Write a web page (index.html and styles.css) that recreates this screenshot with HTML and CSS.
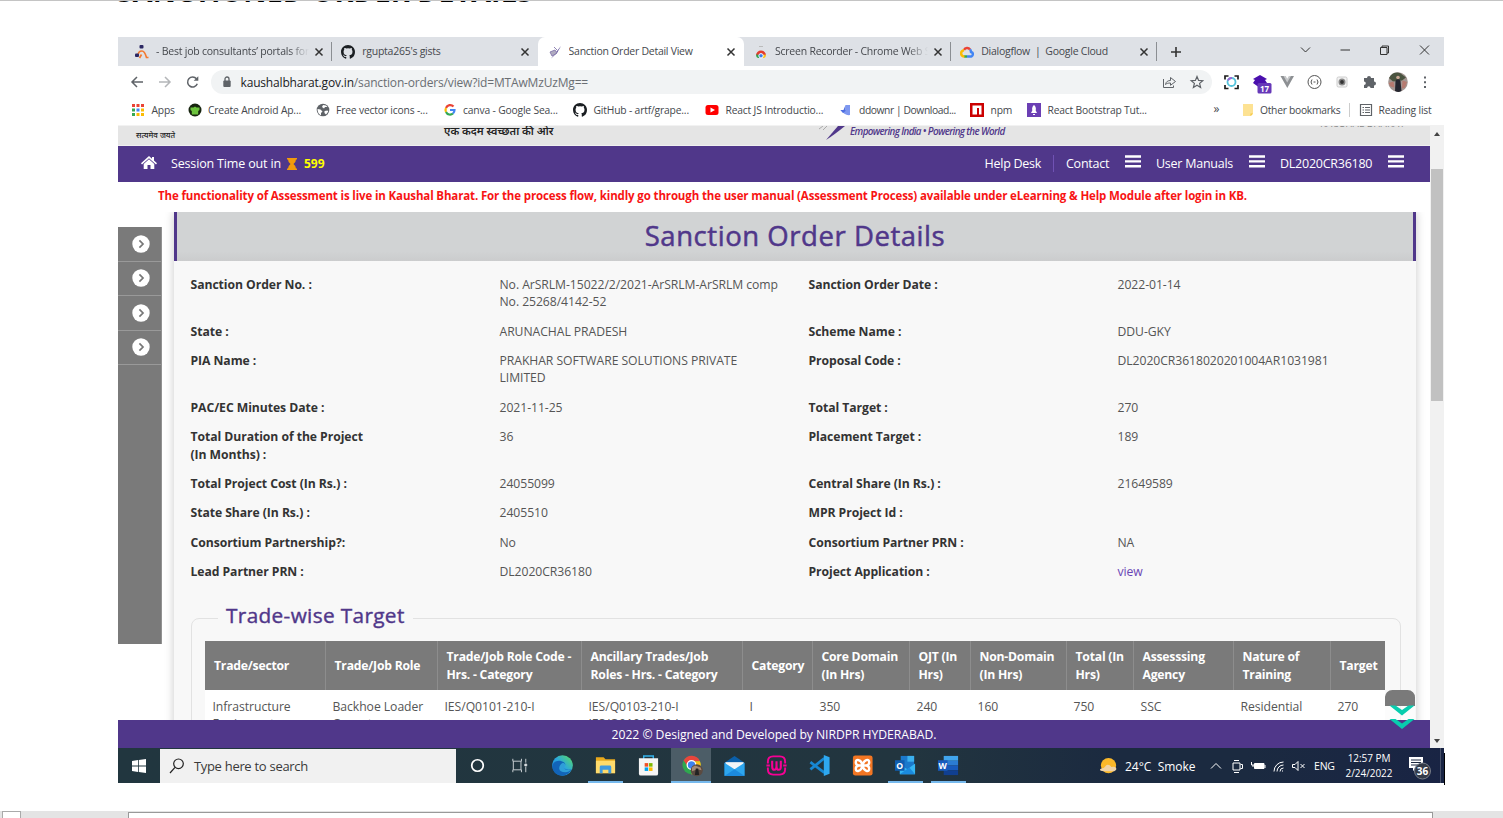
FILE: index.html
```html
<!DOCTYPE html>
<html lang="en">
<head>
<meta charset="utf-8">
<title>Sanction Order Detail View</title>
<link rel="stylesheet" href="styles.css">
</head>
<body>
<svg width="0" height="0" class="defs">
  <defs>
    <symbol id="x" viewBox="0 0 10 10"><path d="M1.500 1.500l7 7M8.500 1.500l-7 7" stroke="#333" stroke-width="1.500"/></symbol>
    <symbol id="github" viewBox="0 0 16 16"><path fill="#1b1f23" d="M8 0C3.58 0 0 3.58 0 8c0 3.54 2.29 6.53 5.47 7.59.4.07.55-.17.55-.38v-1.49c-2.01.37-2.53-.49-2.69-.94-.09-.23-.48-.94-.82-1.13-.28-.15-.68-.52-.01-.53.63-.01 1.08.58 1.23.82.72 1.21 1.87.87 2.33.66.07-.52.28-.87.51-1.07-1.78-.2-3.64-.89-3.64-3.95 0-.87.31-1.59.82-2.15-.08-.2-.36-1.02.08-2.12 0 0 .67-.21 2.2.82a7.400 7.400 0 014 0c1.530-1.040 2.200-.82 2.200-.82.44 1.100.16 1.920.08 2.120.51.56.82 1.270.82 2.150 0 3.070-1.870 3.750-3.650 3.950.29.25.54.73.54 1.480v2.200c0 .21.15.46.55.38A8 8 0 0016 8c0-4.420-3.580-8-8-8z"/></symbol>
    <symbol id="bars" viewBox="0 0 16 13"><path d="M0 1.500h16M0 6.400h16M0 11.300h16" stroke="#fff" stroke-width="2.400"/></symbol>
    <symbol id="arrow" viewBox="0 0 18 18"><circle cx="9" cy="9" r="8.700" fill="#fff"/><path d="M7.400 5.400L11 9l-3.600 3.600" fill="none" stroke="#777" stroke-width="1.700"/></symbol>
    <linearGradient id="edge" x1="0" y1="1" x2="1" y2="0"><stop offset="0" stop-color="#1476d2"/><stop offset=".5" stop-color="#2aa5e0"/><stop offset="1" stop-color="#5be05a"/></linearGradient>
  </defs>
</svg>

<div class="doc-top"><h1>SANCTIONED ORDER DETAILS</h1></div>

<div class="window">
  <div class="tabs">
    <div class="tab sep">
      <svg class="fav" viewBox="0 0 14 14"><path d="M3 11c0-4 1.500-5 4-5s3.500 3 4.500 6.500h2M6.500 9.500L4.500 13" fill="none" stroke="#f47a30" stroke-width="1.700"/><rect x="4.500" y="0" width="4" height="3.600" rx="1" fill="#2b2763"/><rect x="0" y="8.500" width="4" height="3.600" rx="1" fill="#2b2763"/></svg>
      <span class="fade">- Best job consultants’ portals for</span><svg class="close"><use href="#x"/></svg>
    </div>
    <div class="tab">
      <svg class="fav"><use href="#github"/></svg><span>rgupta265's gists</span><svg class="close"><use href="#x"/></svg>
    </div>
    <div class="tab active">
      <svg class="fav" viewBox="0 0 14 14"><path d="M3 13.500L13 1 9 8z" fill="#5d4c96"/><path d="M2 7l5-2 2 3-5 3zM6 2l3 3" fill="#b0abc0" stroke="#8478ad" stroke-width=".9"/></svg>
      <span>Sanction Order Detail View</span><svg class="close"><use href="#x"/></svg>
    </div>
    <div class="tab sep">
      <svg class="fav" viewBox="0 0 14 14"><path d="M5 1.500h4" stroke="#bbb"/><path d="M2 10.500a5 5 0 0110 0z" fill="#e33b2e"/><path d="M12 9.500q0 3-2 3.500H7.500V10z" fill="#fbc116"/><path d="M2 9.500q0 3 2 3.500h3V10z" fill="#2aa24c"/><circle cx="7" cy="10.800" r="2.200" fill="#3b7ded" stroke="#fff"/></svg>
      <span class="fade">Screen Recorder - Chrome Web S</span><svg class="close"><use href="#x"/></svg>
    </div>
    <div class="tab sep">
      <svg class="fav" viewBox="0 0 14 14" fill="none" stroke-width="2.500"><path d="M4 5a3.500 3.500 0 016-.5" stroke="#ea4335"/><path d="M10 4.500c1 1 .8 1.500 1 2.500a2.300 2.300 0 01-1 4.500H7" stroke="#4285f4"/><path d="M7 11.500H4" stroke="#34a853"/><path d="M4.500 11.500A3 3 0 014 5.300" stroke="#fbbc05"/></svg>
      <span>Dialogflow&nbsp; |&nbsp; Google Cloud</span><svg class="close"><use href="#x"/></svg>
    </div>
    <svg class="plus" viewBox="0 0 12 12"><path d="M6 1v10M1 6h10" stroke="#333" stroke-width="1.600"/></svg>
    <svg class="controls" viewBox="0 0 132 12" fill="none" stroke="#333"><path d="M1 3.500l4.500 4.500L10 3.500M40.500 6H50M80.500 3.500h6.500v7h-6.500zM82 3.500V2h6.500v7H87M120 1.500l9 9M129 1.500l-9 9"/></svg>
  </div>

  <div class="toolbar">
    <svg class="navbtns" viewBox="0 0 70 16" fill="none" stroke="#5f6368" stroke-width="1.500"><path d="M13 8H2M7 3L2 8l5 5"/><path d="M29 8h11M35 3l5 5-5 5" stroke="#b4b6b9"/><path d="M66.500 4.800a5 5 0 10.800 5"/><path d="M68.300 2.200v4.600h-4.600z" fill="#5f6368" stroke="none"/></svg>
    <div class="omnibox">
      <svg class="lock" viewBox="0 0 10 12"><rect x="1.300" y="4.500" width="7.400" height="6.500" rx="1" fill="#5f6368"/><path d="M3 5V3a2 2 0 014 0v2" fill="none" stroke="#5f6368" stroke-width="1.300"/></svg>
      <span class="url">kaushalbharat.gov.in<i>/sanction-orders/view?id=MTAwMzUzMg==</i></span>
      <svg class="omni-icons" viewBox="0 0 42 14" fill="none" stroke="#5f6368"><path d="M1.500 4v8.500h10v-2M3.500 9.500c.5-3 2.500-4 5-4V2.500L13.500 6.500 8.500 10.300V8c-2.500 0-4 .5-5 1.500z"/><path stroke-width="1.200" d="M35 1.500l1.600 3.900 4.200.3-3.200 2.700 1 4.100L35 10.300l-3.600 2.200 1-4.100-3.200-2.700 4.200-.3z"/></svg>
    </div>
    <svg class="exts" viewBox="0 0 210 24">
      <g fill="none" stroke="#1c1c1c" stroke-width="1.700"><path d="M5 9.500V6h3.500M14.500 6H18v3.500M18 15v3.500h-3.500M8.500 18.500H5V15"/></g><circle cx="11.500" cy="12" r="4" fill="none" stroke="#55c4dc" stroke-width="1.800"/><path d="M8 10.500a4 4 0 014-2.500" stroke="#9d68d8" stroke-width="1.800" fill="none"/>
      <path d="M40 5l7 4-2 1 2 3-7 5-7-5 2-3-2-1z" fill="#4a0fad"/><rect x="37.500" y="13" width="14" height="10.500" rx="1.500" fill="#6638b8"/><text x="44.500" y="21.500" class="badge17">17</text>
      <path d="M60.500 6h4.500l2.200 4L69.500 6H74l-6.700 12z" fill="#8d9093"/><path d="M63.500 6h2.300l1.400 2.800L68.800 6H71l-3.800 6.500z" fill="#c7c9cb"/>
      <circle cx="94.500" cy="12" r="6.500" fill="none" stroke="#555"/><path d="M92 9.500q-2 2.500 0 5M97 9.500q2 2.500 0 5M93.500 12h2" fill="none" stroke="#555"/>
      <rect x="117" y="7" width="10" height="10" rx="1.500" fill="#f2f2f2" stroke="#ccc"/><circle cx="122" cy="12" r="3.500" fill="#888"/><circle cx="122" cy="12" r="1.900" fill="#333"/>
      <path d="M144 8h3a2 2 0 114 0h3v3.500a2 2 0 110 4V18h-3.500a1.700 1.700 0 00-3.400 0H144v-3a1.800 1.800 0 000-3.600z" fill="#5f6368"/>
      <circle cx="178" cy="12" r="9.800" fill="#a39692"/><path d="M169 8q4-7 11-5l6 4.500-4 3-9 1z" fill="#4a5440"/><path d="M168.500 13l5-1.500 1 6-4-1zM182.500 10.500l4.500 1.500-2 5.500-3 1z" fill="#b77a70"/><path d="M175 21l.5-10q2.500-4 5 0l1 10q-3 2-6.500 0z" fill="#25262f"/><circle cx="178" cy="7.500" r="1.800" fill="#c8a794"/>
      <path d="M205 6.500v2M205 11.200v2M205 15.900v2" stroke="#5f6368" stroke-width="2"/>
    </svg>
  </div>

  <div class="bookmarks">
    <div><svg viewBox="0 0 14 14"><g fill="#ea4335"><path d="M1 1h3v3H1zM5.500 1h3v3h-3zM10 1h3v3h-3z"/></g><path d="M1 5.500h3v3H1z" fill="#34a853"/><path d="M5.500 5.500h3v3h-3z" fill="#4285f4"/><path d="M10 5.500h3v3h-3zM5.500 10h3v3h-3zM10 10h3v3h-3z" fill="#fbbc05"/><path d="M1 10h3v3H1z" fill="#34a853"/></svg><span>Apps</span></div>
    <div><svg viewBox="0 0 14 14"><circle cx="7" cy="7" r="6.500" fill="#17240f"/><path d="M2.500 4.500h3L7 3.500l1.500 1h3V7l-1.300 1v3.500H3.800V8L2.500 7z" fill="#6cc33d"/></svg><span>Create Android Ap...</span></div>
    <div><svg viewBox="0 0 14 14"><circle cx="7" cy="7" r="6.300" fill="#5f6368"/><path d="M1.500 6l3 .5 2 2L5 10v2.500Q1.500 10.500 1.500 6zM7 2l-1 2 2 1.500 1-1.500h2.500L10 2.500zM8.500 8l3-.5.800 1L10 11.500 8.500 10z" fill="#fff"/></svg><span>Free vector icons -...</span></div>
    <div><svg viewBox="0 0 14 14" fill="none" stroke-width="2.200"><path d="M3 5a4.500 4.500 0 017.500-1.500" stroke="#ea4335"/><path d="M3 5a4.500 4.500 0 000 4" stroke="#fbbc05"/><path d="M3 9a4.500 4.500 0 007 1.500" stroke="#34a853"/><path d="M10 10.500q1.500-1.500 1.500-3.500H7" stroke="#4285f4"/></svg><span>canva - Google Sea...</span></div>
    <div><svg><use href="#github"/></svg><span>GitHub - artf/grape...</span></div>
    <div><svg viewBox="0 0 14 14"><rect x=".5" y="2" width="13" height="10" rx="2.500" fill="#f00"/><path d="M5.500 4.500v5L10 7z" fill="#fff"/></svg><span>React JS Introductio...</span></div>
    <div class="ddownr"><svg viewBox="0 0 14 14"><path d="M6.500 2H11v10q-5 1-9.500-5h5z" fill="#7d97f0"/><path d="M6.500 2v6L4 10 1.500 7h3z" fill="#4e6ee0"/></svg><span>ddownr | Download...</span></div>
    <div><svg viewBox="0 0 14 14"><path d="M0 0h14v14H0z" fill="#cb0000"/><path d="M2.500 2.500h9v9H9V5H7v6.500H2.500z" fill="#fff"/></svg><span>npm</span></div>
    <div><svg viewBox="0 0 14 14"><path d="M0 0h14v14H0z" fill="#6b3fb4"/><path d="M7 2q2.500 2 1.700 5.500L10 10H4l1.300-2.500Q4.500 4 7 2zM6 11h2v1H6z" fill="#fff"/></svg><span>React Bootstrap Tut...</span></div>
    <div class="more">»</div>
    <div class="folder"><svg viewBox="0 0 14 14"><path d="M2 1h10v10l-2 2H2z" fill="#fde293"/><path d="M9.500 13v-2.500H12z" fill="#f3c63f"/></svg><span>Other bookmarks</span></div>
    <div class="reading"><svg viewBox="0 0 14 14" fill="none" stroke="#5f6368" stroke-width="1.200"><path d="M1.500 1.500h11v11h-11zM3.500 4.500H5M3.500 7H5M3.500 9.500H5M6 4.500h5M6 7h5M6 9.500h5"/></svg><span>Reading list</span></div>
  </div>

  <div class="viewport">
    <div class="site">
      <header class="banner">
        <span class="hi motto">सत्यमेव जयते</span>
        <span class="hi swachh">एक कदम स्वच्छता की ओर</span>
        <svg class="swoosh" viewBox="0 0 26 14"><path d="M26 0h-7L7 14q8-5 19-14z" fill="#50378a"/><path d="M4 0L0 3M8 0L4 4" stroke="#aaa"/></svg>
        <span class="tagline">Empowering India • Powering the World</span>
        <span class="cropped">KAUSHAL BHARAT</span>
      </header>
      <nav class="nav">
        <svg class="home" viewBox="0 0 16 13"><path d="M8 0l3 2.700V1h2v3.500l3 2.800-1 1.100-7-6.200-7 6.200-1-1.100z" fill="#fff"/><path d="M8 3.200l5.300 4.700V13H9.500V9h-3v4H2.700V7.900z" fill="#fff"/></svg>
        <span class="session">Session Time out in</span>
        <svg class="glass" viewBox="0 0 10 12"><path d="M0 0h10v1.500H9Q9 4 6.500 6 9 8 9 10.500h1V12H0v-1.500h1Q1 8 3.500 6 1 4 1 1.500H0z" fill="#f29b0c"/></svg>
        <b class="timer">599</b>
        <div class="menu">
          <span class="help">Help Desk</span><span class="contact">Contact</span><svg><use href="#bars"/></svg>
          <span class="manuals">User Manuals</span><svg><use href="#bars"/></svg>
          <span class="user">DL2020CR36180</span><svg><use href="#bars"/></svg>
        </div>
      </nav>
      <p class="notice">The functionality of Assessment is live in Kaushal Bharat. For the process flow, kindly go through the user manual (Assessment Process) available under eLearning &amp; Help Module after login in KB.</p>
      <div class="cols">
        <aside class="side">
          <div><svg><use href="#arrow"/></svg></div><div><svg><use href="#arrow"/></svg></div><div><svg><use href="#arrow"/></svg></div><div><svg><use href="#arrow"/></svg></div>
        </aside>
        <main class="panel">
          <h2>Sanction Order Details</h2>
          <div class="panel-body">
            <dl class="details">
              <dt>Sanction Order No. :</dt><dd>No. ArSRLM-15022/2/2021-ArSRLM-ArSRLM comp<br>No. 25268/4142-52</dd><dt>Sanction Order Date :</dt><dd>2022-01-14</dd>
              <dt>State :</dt><dd>ARUNACHAL PRADESH</dd><dt>Scheme Name :</dt><dd>DDU-GKY</dd>
              <dt>PIA Name :</dt><dd>PRAKHAR SOFTWARE SOLUTIONS PRIVATE<br>LIMITED</dd><dt>Proposal Code :</dt><dd>DL2020CR3618020201004AR1031981</dd>
              <dt>PAC/EC Minutes Date :</dt><dd>2021-11-25</dd><dt>Total Target :</dt><dd>270</dd>
              <dt>Total Duration of the Project<br>(In Months) :</dt><dd>36</dd><dt>Placement Target :</dt><dd>189</dd>
              <dt>Total Project Cost (In Rs.) :</dt><dd>24055099</dd><dt>Central Share (In Rs.) :</dt><dd>21649589</dd>
              <dt>State Share (In Rs.) :</dt><dd>2405510</dd><dt>MPR Project Id :</dt><dd></dd>
              <dt>Consortium Partnership?:</dt><dd>No</dd><dt>Consortium Partner PRN :</dt><dd>NA</dd>
              <dt>Lead Partner PRN :</dt><dd>DL2020CR36180</dd><dt>Project Application :</dt><dd><a>view</a></dd>
            </dl>
            <fieldset>
              <legend>Trade-wise Target</legend>
              <table>
                <colgroup><col class="c1"><col class="c2"><col class="c3"><col class="c4"><col class="c5"><col class="c6"><col class="c7"><col class="c8"><col class="c9"><col class="c10"><col class="c11"><col class="c12"></colgroup>
                <thead><tr><th>Trade/sector</th><th>Trade/Job Role</th><th>Trade/Job Role Code -<br>Hrs. - Category</th><th>Ancillary Trades/Job<br>Roles - Hrs. - Category</th><th>Category</th><th>Core Domain<br>(In Hrs)</th><th>OJT (In<br>Hrs)</th><th>Non-Domain<br>(In Hrs)</th><th>Total (In<br>Hrs)</th><th>Assesssing<br>Agency</th><th>Nature of<br>Training</th><th>Target</th></tr></thead>
                <tbody><tr><td>Infrastructure<br>Equipment</td><td>Backhoe Loader<br>Operator</td><td>IES/Q0101-210-I</td><td>IES/Q0103-210-I<br>IES/Q0104-170-I</td><td>I</td><td>350</td><td>240</td><td>160</td><td>750</td><td>SSC</td><td>Residential</td><td>270</td></tr></tbody>
              </table>
            </fieldset>
          </div>
        </main>
      </div>
      <footer>2022 © Designed and Developed by NIRDPR HYDERABAD.</footer>
      <svg class="godown" viewBox="0 0 31 40"><path d="M0 16V8a7.500 7.500 0 017.500-8h15A7.500 7.500 0 0130 8v8z" fill="#7a7a7a"/><path d="M0 16h30v14H0z" fill="#fff" opacity=".6"/><path d="M4.500 15.500h6l6.500 4.500 6.500-4.500h6L17 25.500zM4.500 29h6l6.500 4.500 6.500-4.500h6L17 39z" fill="#08cdae"/></svg>
    </div>
    <div class="scroll"><span class="up"></span><span class="thumb"></span><span class="down"></span></div>
  </div>

  <div class="taskbar">
    <div class="start"><svg viewBox="0 0 14 14"><path d="M0 2l6-.9v5.500H0zM6.800 1L14 0v6.600H6.800zM0 7.400h6v5.500L0 12zM6.800 7.400H14V14l-7.200-1z" fill="#fff"/></svg></div>
    <div class="search"><svg viewBox="0 0 16 16" fill="none" stroke="#222" stroke-width="1.200"><circle cx="9.500" cy="5.800" r="4.800"/><path d="M6 9.300L1 15"/></svg>Type here to search</div>
    <div class="apps">
      <div><svg viewBox="0 0 24 24"><circle cx="12" cy="12" r="6" fill="none" stroke="#fff" stroke-width="1.800"/></svg></div>
      <div><svg viewBox="0 0 24 24" fill="none" stroke="#ccd2d5"><path d="M4 5v2.500h9V5M4 19v-2.500h9V19M4.500 7.500v9M12.500 7.500v9M17.500 5v4M17.500 13.500V19"/><path d="M16.500 10.500h2v2h-2z" fill="#fff"/></svg></div>
      <div><svg viewBox="0 0 24 24"><circle cx="12" cy="12" r="10.800" fill="url(#edge)"/><path d="M1.300 13C2 8 7 6 11 7.500q4 1 4 4-1 1-1.500 2 1 4 8 2.500-4 7-10.500 6.800Q2 21.500 1.300 13z" fill="#1264b8"/><path d="M8.500 15q0-4 4-6 3 1 2.500 3-1.500 1-1 2.500 1 3.500 7 1.500-2 3-6 3-6 0-6.500-4z" fill="#3bb7e6" opacity=".7"/></svg></div>
      <div class="open"><svg viewBox="0 0 24 24"><path d="M2 3.500h8l2 2h10V20H2z" fill="#e9a91c"/><path d="M2 7h20v13H2z" fill="#ffdb6b"/><path d="M6 20v-6.500q0-1.500 1.500-1.500h9q1.500 0 1.500 1.500V20h-3v-3.500H9V20z" fill="#3f9ae0"/></svg></div>
      <div><svg viewBox="0 0 24 24"><path d="M7 6V2h10v4" fill="none" stroke="#35b3ec" stroke-width="1.500"/><path d="M2 4.500h20v16q0 2-2 2H4q-2 0-2-2z" fill="#f5f5f5"/><path d="M8 9.500h3.700v3.700H8z" fill="#f25022"/><path d="M12.500 9.500h3.700v3.700h-3.700z" fill="#7fba00"/><path d="M8 14h3.700v3.700H8z" fill="#00a4ef"/><path d="M12.500 14h3.700v3.700h-3.700z" fill="#ffb900"/></svg></div>
      <div class="open current"><svg viewBox="0 0 24 24"><circle cx="12" cy="11.500" r="9.500" fill="#2fa84f"/><path d="M3.800 6.800a9.500 9.500 0 0117 .7H12l-3.500 6z" fill="#e8453c"/><path d="M20.800 7.500a9.500 9.500 0 01-9 13.500l4-8-1-5.500z" fill="#fbc116"/><circle cx="12" cy="11.500" r="4.500" fill="#3e82f1" stroke="#fff" stroke-width="1.300"/><circle cx="17.500" cy="17" r="6.300" fill="#5b4a40"/><path d="M12.500 14l3-2 6 2 1 3-4-1-6 2z" fill="#a58a75"/><path d="M15.500 22l1-7H19l1 7z" fill="#222"/></svg></div>
      <div><svg viewBox="0 0 24 24"><path d="M1.500 9L12 2l10.500 7v13h-21z" fill="#0b5fa9"/><path d="M2.500 8.500h19v9h-19z" fill="#f2f5f7"/><path d="M1.500 9L12 16l10.500-7v14h-21z" fill="#2ea6ee"/><path d="M1.500 23L12 16l10.500 7z" fill="#1c8ade"/></svg></div>
      <div><svg viewBox="0 0 24 24" fill="none" stroke="#f70094"><path d="M3 10V8q0-5.500 5.500-5.500h7Q21 2.500 21 8v2M3 14v2q0 5.500 5.500 5.500h7Q21 21.500 21 16v-2" stroke-width="2"/><path d="M7.500 7v6q0 3.500 2.200 3.500t2.300-3.500V7.500V13q0 3.500 2.300 3.500t2.200-3.500V7M1.500 12H5M19 12h3.500" stroke-width="2.200"/></svg></div>
      <div><svg viewBox="0 0 24 24"><path d="M2.500 8.500L17 19.500M2.500 16L17 4.500" stroke="#1787d2" stroke-width="2.800" fill="none"/><path d="M16.500 1l6 2.500v17l-6 2.500z" fill="#2ea8f0"/></svg></div>
      <div><svg viewBox="0 0 24 24"><rect x="2" y="1.500" width="20.500" height="21" rx="2.500" fill="#f37623"/><path d="M8 6.500q-3-1-3 2t3 3.500h8q3-.5 3-3.500t-3-2-4 5.500q-1-5-4-5.500zM8 17.500q-3 1-3-2T8 12h8q3 .5 3 3.500t-3 2-4-5.500q-1 5-4 5.500z" fill="none" stroke="#fff" stroke-width="2.500"/></svg></div>
      <div class="open"><svg viewBox="0 0 24 24"><path d="M7 2h14v17H7z" fill="#1b79cc"/><path d="M14 2h7v6h-7z" fill="#3bb0ee"/><path d="M6 11l8 5 8-6v11H6z" fill="#35b5f2"/><path d="M6 21l10-7 6 7z" fill="#1a8ade"/><path d="M1 6.500h10v11H1z" fill="#0f5db0"/><text x="6" y="15.500" class="letter">O</text></svg></div>
      <div class="open"><svg viewBox="0 0 24 24"><path d="M7 2h15v5H7z" fill="#41a5ee"/><path d="M7 7h15v5H7z" fill="#2b7cd3"/><path d="M7 12h15v5H7z" fill="#185abd"/><path d="M7 17h15v5H7z" fill="#103f91"/><path d="M1 6.500h10v11H1z" fill="#185abd"/><text x="6" y="15.500" class="letter">W</text></svg></div>
    </div>
    <div class="tray">
      <svg class="weather" viewBox="0 0 20 18"><circle cx="10" cy="8.500" r="8" fill="#fbb829"/><path d="M5 14.500q-4 0-4-1.500t4-2l3-3q3-1 5 2 4-1 5 1t-2 3.500z" fill="#f1d3a5"/></svg>
      <span class="temp">24°C&nbsp; Smoke</span>
      <svg class="status" viewBox="0 0 98 16" fill="none" stroke="#fff"><path d="M1 10.500L6 5.500l5 5"/><path d="M23 5h7v7h-7zM30.500 6.500h2v4h-2M24 2.500h5M24 14.500h5"/><path d="M44.500 5.500h9.500v5h-9.500z" fill="#fff"/><path d="M41.500 4v3h3M55 7v3M43 7v2"/><path d="M64 13.500A9.500 9.500 0 0173.500 4M67 13.500A6.500 6.500 0 0173.500 7M70 13.500a3.500 3.500 0 013.500-3.500M72 13h1"/><path d="M82.500 6.500H85l3-3v9l-3-3h-2.500zM90.500 6l4 4M94.500 6l-4 4"/></svg>
      <span class="eng">ENG</span>
      <div class="clock">12:57 PM<br>2/24/2022</div>
      <svg class="notif" viewBox="0 0 24 24"><path d="M1 1h14v11H8l-3 3v-3H1z" fill="#fff"/><path d="M3 4h10M3 6.500h10M3 9h8" stroke="#1d2940"/><circle cx="14.500" cy="15" r="8" fill="#333a48" stroke="#777d88"/><text x="14.500" y="19" class="count">36</text></svg>
    </div>
  </div>
</div>

<div class="doc-bottom"><span class="cell"></span><span class="box"></span></div>
</body>
</html>
```
FILE: styles.css
```css
* { box-sizing: border-box; }
body { margin: 0; width: 1503px; height: 818px; overflow: hidden; background: #fff; display: flex; flex-direction: column; font-family: "Open Sans", "Noto Sans", sans-serif; }
.defs { position: absolute; }
svg { flex: none; display: block; }

.doc-top { height: 37px; border-top: 1px solid #c4c4c4; overflow: hidden; flex: none; }
.doc-top h1 { margin: -30px 0 0 117px; font-size: 28.500px; line-height: 40px; color: #000; white-space: nowrap; letter-spacing: .15px; }

.window { margin-left: 118px; width: 1327px; height: 746px; flex: none; display: flex; flex-direction: column; }

.tabs { width: 1326px; height: 29px; background: #dee1e6; display: flex; padding-left: 7.500px; align-items: center; flex: none; }
.tab { width: 206.300px; height: 29px; display: flex; align-items: center; padding-left: 9.500px; font-size: 10.500px; letter-spacing: -.26px; color: #45484d; white-space: nowrap; }
.tab span { flex: 1; overflow: hidden; margin-left: 7px; margin-top: -1px; }
.fav { width: 14px; height: 14px; }
.fade { -webkit-mask-image: linear-gradient(90deg, #000 87%, transparent); mask-image: linear-gradient(90deg, #000 87%, transparent); }
.close { width: 10px; height: 10px; margin: 0 8.500px 0 6px; }
.tab.sep .close { margin: 0 7px 0 5px; }
.tab .fade { letter-spacing: -.22px; }
.tab.sep { border-right: 1px solid #8b8e92; border-image: linear-gradient(transparent 20%, #8b8e92 20%, #8b8e92 80%, transparent 80%) 1; }
.tab.active { background: #fff; border-radius: 7px 7px 0 0; }
.plus { width: 12px; height: 12px; margin-left: 13px; }
.controls { width: 132px; height: 12px; margin: -3px 0 0 118px; }

.toolbar { width: 1326px; height: 32px; display: flex; align-items: center; flex: none; }
.navbtns { width: 70px; height: 16px; margin-left: 12px; }
.omnibox { width: 1001px; height: 24px; margin-left: 11px; border-radius: 12px; background: #f1f3f4; display: flex; align-items: center; }
.lock { width: 10px; height: 12px; margin-left: 10.500px; }
.url { flex: 1; margin-left: 9px; font-size: 12px; color: #202124; letter-spacing: -.17px; }
.url i { font-style: normal; color: #6a6e73; }
.omni-icons { width: 42px; height: 14px; margin-right: 8px; }
.exts { width: 210px; height: 24px; margin-left: 8px; }
.badge17 { font: bold 8px "Open Sans", sans-serif; fill: #fff; text-anchor: middle; }

.bookmarks { width: 1326px; height: 27px; flex: none; padding: 0 0 4px 13px; display: grid; grid-template-columns: 56.500px 128px 127px 130.500px 132px 134px 131px 57px 186.500px 27px 108px 90px; align-items: center; font-size: 10.300px; letter-spacing: -.17px; color: #45484d; white-space: nowrap; }
.bookmarks div { display: flex; align-items: center; gap: 6.500px; }
.bookmarks .ddownr { letter-spacing: -.42px; gap: 6px; }
.bookmarks .folder { letter-spacing: -.28px; gap: 5.500px; }
.bookmarks svg { width: 14px; height: 14px; }
.bookmarks .more { font-size: 12px; margin-top: -2px; }
.reading { border-left: 1px solid #ccc; padding-left: 9px; }
.bookmarks .reading { gap: 6px; }

.viewport { width: 1326px; height: 623px; display: flex; flex: none; }
.site { width: 1312px; height: 623px; position: relative; overflow: hidden; display: flex; flex-direction: column; }
.banner { height: 20px; flex: none; background: #e5e5e5; border-top: 1px solid #f2f2f2; display: flex; overflow: hidden; white-space: nowrap; }
.hi { color: #222; line-height: 14px; font-family: "Noto Sans Devanagari", "Noto Sans", sans-serif; font-weight: 600; }
.motto { width: 290px; margin-left: 18px; font-size: 7.900px; margin-top: 3px; font-weight: 500; }
.swachh { width: 375px; margin-left: 18px; font-size: 10.900px; margin-top: -1px; }
.swoosh { width: 26px; height: 14px; }
.tagline { margin: -1px 0 0 5px; width: 470px; font-size: 9.800px; line-height: 14px; font-weight: 600; font-style: italic; color: #50378a; letter-spacing: -.62px; }
.cropped { font-size: 10px; line-height: 10px; margin-top: -8px; color: #888; }

.nav { height: 37px; flex: none; background: #50378a; border-top: 1px solid #f0f0f0; display: flex; align-items: center; padding-bottom: 2px; color: #fff; font-size: 12.500px; white-space: nowrap; }
.home { width: 16px; height: 13px; margin: -2px 0 0 22.500px; }
.session { width: 111px; margin-left: 14.500px; letter-spacing: -.16px; }
.glass { width: 10px; height: 12px; margin: 1px 0 0 5px; }
.timer { color: #ff0; margin-left: 7px; font-size: 12px; }
.menu { margin-left: auto; padding-right: 26px; display: flex; align-items: center; letter-spacing: -.25px; }
.menu svg { width: 16px; height: 13px; margin: -3px 0 0 -1px; }
.help { width: 69.500px; border-right: 1px solid #7052b4; }
.contact { width: 60px; margin-left: 12px; }
.manuals { width: 94px; margin-left: 15px; }
.user { width: 109px; margin-left: 15px; }

.notice { margin: 0; height: 30px; flex: none; padding-left: 40px; line-height: 27px; font-size: 11.500px; font-weight: 700; color: #f81414; white-space: nowrap; letter-spacing: -.138px; }
.cols { display: flex; height: 508px; flex: none; }
.side { width: 44px; height: 417px; margin-top: 15px; background: #7a7a7a; border-right: 1px solid #929292; }
.side div { height: 34.500px; border-bottom: 1px solid #999; display: flex; align-items: center; padding-left: 14px; }
.side svg { width: 18px; height: 18px; }
.panel { width: 1242px; margin-left: 12px; height: 520px; box-shadow: 0 0 9px rgba(0,0,0,.22); clip-path: inset(0 -14px); background: #f8f8f8; }
.panel h2 { margin: 0; height: 49px; line-height: 47px; background: linear-gradient(#d1d3d4 80%, #cbcccd); border: solid #50378a; border-width: 0 3px; text-align: center; font-size: 27.500px; font-weight: 400; -webkit-text-stroke: .5px #50378a; color: #50378a; letter-spacing: .55px; }
.panel-body { padding: 9px 15.500px 0 16.500px; }
.details { margin: 0; padding-top: 5.700px; display: grid; grid-template-columns: 309px 309px 309px 1fr; row-gap: 12px; font-size: 12.200px; line-height: 17.400px; color: #555; white-space: nowrap; letter-spacing: -.06px; }
.details dt { font-weight: 700; color: #333; }
.details dd { margin: 0; }
.details a { color: #6a45b5; }
fieldset { margin: 19.800px 0 0; border: 1px solid #e2e2e2; border-radius: 8px; padding: 5px 13px 10px 13.500px; height: 200px; min-width: 0; }
legend { margin-left: 13px; padding: 0 8px 5px; font-size: 20.800px; line-height: 31px; font-weight: 400; -webkit-text-stroke: .4px #50378a; color: #50378a; letter-spacing: .34px; }
table { width: 1180px; table-layout: fixed; border-collapse: collapse; font-size: 12.200px; line-height: 17.400px; white-space: nowrap; background: #fff; color: #555; letter-spacing: -.05px; }
th { background: #7a7a7a; color: #fff; text-align: left; height: 49px; padding: 0 0 0 9px; border-left: 1px solid #8d8d8d; font-weight: 700; letter-spacing: -.22px; }
th:first-child { border-left: 0; }
td { vertical-align: top; padding: 7.500px 0 0 7.500px; }
.c1 { width: 120px; } .c2 { width: 112px; } .c3 { width: 144px; } .c4 { width: 161px; } .c5 { width: 70px; } .c6 { width: 97px; }
.c7 { width: 61px; } .c8 { width: 96px; } .c9 { width: 67px; } .c10 { width: 100px; } .c11 { width: 97px; } .c12 { width: 55px; }
footer { position: absolute; left: 0; right: 0; bottom: 0; height: 28px; line-height: 29px; text-align: center; background: #50378a; color: #fff; font-size: 12.200px; letter-spacing: -.05px; }
.godown { position: absolute; left: 1267px; top: 565px; width: 31px; height: 40px; }
.scroll { width: 14px; background: #f1f1f1; display: flex; flex-direction: column; align-items: center; }
.up { margin-top: 7px; border: 3.500px solid transparent; border-top: 0; border-bottom: 4px solid #444; }
.thumb { width: 12px; height: 232px; margin-top: 33px; background: #c1c1c1; }
.down { margin-top: auto; margin-bottom: 5px; border: 3.500px solid transparent; border-bottom: 0; border-top: 4px solid #444; }

.taskbar { position: relative; width: 1326px; height: 35px; display: flex; align-items: center; flex: none; background: linear-gradient(90deg, #21363f 0, #22353f 60%, #1b2a40 75%, #1b2a40 85%, #192444); color: #fff; }
.taskbar::after { content: ""; position: absolute; left: 1326px; top: 5px; width: 1px; height: 32px; background: #000; }
.start { width: 42px; display: flex; padding-left: 14px; }
.start svg { width: 14px; height: 14px; }
.search { width: 296px; height: 34px; background: #f1f1f1; display: flex; align-items: center; gap: 9px; padding-left: 9px; font-size: 13px; color: #3a3a3a; letter-spacing: -.34px; word-spacing: .2px; }
.search svg { width: 16px; height: 16px; }
.apps { display: flex; height: 35px; }
.apps div { width: 42.800px; height: 35px; display: flex; align-items: center; justify-content: center; background-repeat: no-repeat; }
.apps svg { width: 23px; height: 23px; }
.apps .open { background-image: linear-gradient(#76b9ed, #76b9ed); background-size: 35px 2px; background-position: 50% 100%; }
.apps .current { background-image: linear-gradient(#76b9ed, #76b9ed), linear-gradient(#4c5d67, #4c5d67); background-size: 40px 2px, 40px 35px; }
.letter { font: bold 9px "Open Sans", sans-serif; fill: #fff; text-anchor: middle; }
.tray { margin-left: auto; display: flex; align-items: center; width: 345px; height: 35px; border-right: 1px solid #4a536b; margin-right: 3px; padding-top: 1px; white-space: nowrap; }
.weather { width: 19px; height: 18px; margin: -1px 0 0 3px; }
.temp { width: 85px; margin-left: 7px; font-size: 12px; }
.status { width: 98px; height: 16px; }
.eng { width: 29px; margin-left: 6px; font-size: 10.500px; letter-spacing: -.2px; }
.clock { width: 54px; margin-left: -1px; font-size: 10px; line-height: 15.500px; text-align: center; letter-spacing: -.05px; }
.notif { width: 24px; height: 24px; margin: 4px 0 0 12px; }
.count { font: bold 10px "Open Sans", sans-serif; fill: #fff; text-anchor: middle; }

.doc-bottom { margin-top: 28px; height: 7px; flex: none; background: #e4e4e4; display: flex; }
.cell { width: 19px; margin-left: 2px; background: #fff; border: 1px solid #aaa; border-bottom: 0; }
.box { width: 1305px; margin-left: 107px; background: #fff; border: 1px solid #999; border-bottom: 0; margin-top: 1px; }
```
